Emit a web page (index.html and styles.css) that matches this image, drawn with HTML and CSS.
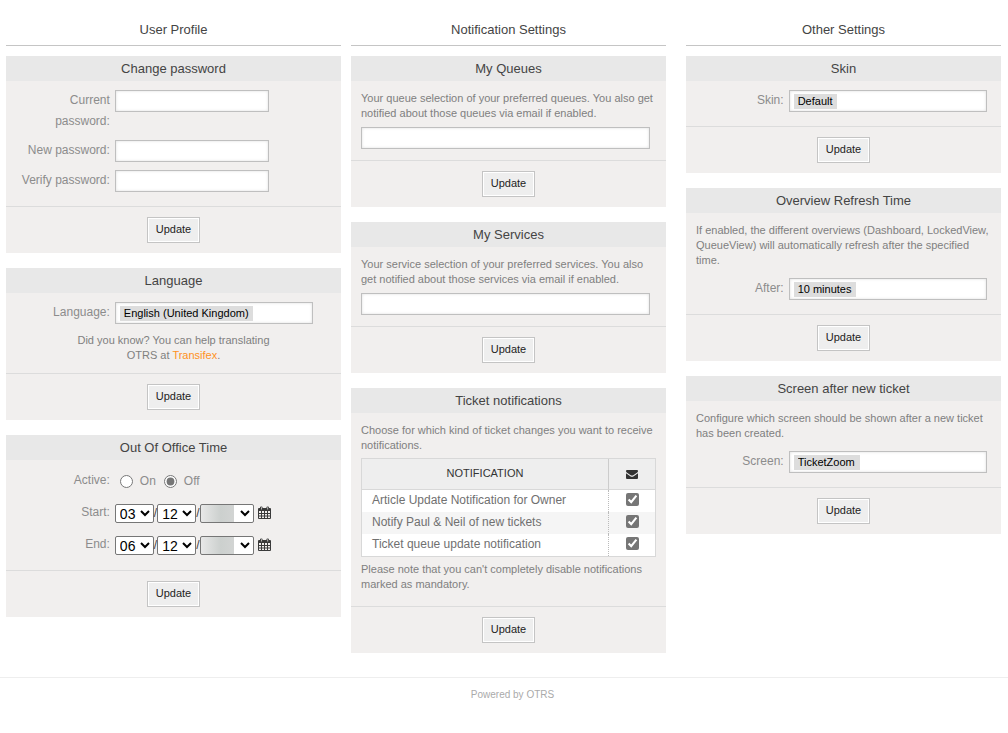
FILE: index.html
```html
<!DOCTYPE html>
<html lang="en">
<head>
<meta charset="utf-8">
<title>Preferences</title>
<link rel="stylesheet" href="styles.css">
</head>
<body>
<svg class="sprite" aria-hidden="true">
  <symbol id="calendar" viewBox="0 0 13 14">
    <path fill="#3a3a3a" fill-rule="evenodd" d="M2 1.500Q2 .5 3.300 .5T4.600 1.500V2H8.400V1.500Q8.400 .5 9.700 .5T11 1.500V2H12Q13 2 13 3V12Q13 13 12 13H1Q0 13 0 12V3Q0 2 1 2H2ZM1 5V7H3V5ZM4 5V7H6V5ZM7 5V7H9V5ZM10 5V7H12V5ZM1 8V9.500H3V8ZM4 8V9.500H6V8ZM7 8V9.500H9V8ZM10 8V9.500H12V8ZM1 10.500V12H3V10.500ZM4 10.500V12H6V10.500ZM7 10.500V12H9V10.500ZM10 10.500V12H12V10.500ZM3 1.300V3.500H3.700V1.300ZM9.400 1.300V3.500H10.100V1.300Z"/>
  </symbol>
</svg>

<main class="columns">
  <section class="column">
    <h1 class="column-title">User Profile</h1>

    <form class="widget">
      <h2 class="widget-title">Change password</h2>
      <div class="widget-body">
        <div class="field"><label for="cur">Current password:</label><input class="text-box" type="password" id="cur"></div>
        <div class="field"><label for="new">New password:</label><input class="text-box" type="password" id="new"></div>
        <div class="field"><label for="ver">Verify password:</label><input class="text-box" type="password" id="ver"></div>
      </div>
      <div class="widget-actions"><button type="button">Update</button></div>
    </form>

    <form class="widget">
      <h2 class="widget-title">Language</h2>
      <div class="widget-body with-hint">
        <div class="field"><label for="lang">Language:</label><div class="select-box"><select id="lang"><option>English (United Kingdom)</option></select></div></div>
        <p class="hint centered">Did you know? You can help translating OTRS at <a href="#">Transifex</a>.</p>
      </div>
      <div class="widget-actions"><button type="button">Update</button></div>
    </form>

    <form class="widget">
      <h2 class="widget-title">Out Of Office Time</h2>
      <div class="widget-body dates">
        <div class="field" role="radiogroup" aria-labelledby="active">
          <span class="label" id="active">Active:</span>
          <div class="radios">
            <input type="radio" name="ooo" id="on"><label for="on">On</label>
            <input type="radio" name="ooo" id="off" checked><label for="off">Off</label>
          </div>
        </div>
        <div class="field">
          <label for="start-day">Start:</label>
          <div class="date">
            <select id="start-day"><option>03</option></select><span>/</span><select aria-label="Start month"><option>12</option></select><span>/</span><select class="year" aria-label="Start year"><option></option></select>
            <a href="#" class="calendar" aria-label="Open calendar"><svg><use href="#calendar"/></svg></a>
          </div>
        </div>
        <div class="field">
          <label for="end-day">End:</label>
          <div class="date">
            <select id="end-day"><option>06</option></select><span>/</span><select aria-label="End month"><option>12</option></select><span>/</span><select class="year" aria-label="End year"><option></option></select>
            <a href="#" class="calendar" aria-label="Open calendar"><svg><use href="#calendar"/></svg></a>
          </div>
        </div>
      </div>
      <div class="widget-actions"><button type="button">Update</button></div>
    </form>
  </section>

  <section class="column middle">
    <h1 class="column-title">Notification Settings</h1>

    <form class="widget">
      <h2 class="widget-title">My Queues</h2>
      <div class="widget-body wide">
        <p class="hint">Your queue selection of your preferred queues. You also get notified about those queues via email if enabled.</p>
        <input class="text-box" type="text" aria-label="My Queues">
      </div>
      <div class="widget-actions"><button type="button">Update</button></div>
    </form>

    <form class="widget">
      <h2 class="widget-title">My Services</h2>
      <div class="widget-body wide">
        <p class="hint">Your service selection of your preferred services. You also get notified about those services via email if enabled.</p>
        <input class="text-box" type="text" aria-label="My Services">
      </div>
      <div class="widget-actions"><button type="button">Update</button></div>
    </form>

    <form class="widget">
      <h2 class="widget-title">Ticket notifications</h2>
      <div class="widget-body notifications">
        <p class="hint">Choose for which kind of ticket changes you want to receive notifications.</p>
        <table>
          <thead>
            <tr>
              <th scope="col">NOTIFICATION</th>
              <th scope="col" class="check" aria-label="Email">
                <svg class="mail" viewBox="0 0 12 9"><path fill="#333" d="M0 1Q0 0 1 0H11Q12 0 12 1V1.300Q12 1.900 11.300 2.400L7.300 5.200Q6 6 4.700 5.200L.7 2.400Q0 1.900 0 1.300ZM0 3.200 4.300 6.200Q6 7.200 7.700 6.200L12 3.200V8Q12 9 11 9H1Q0 9 0 8Z"/></svg>
              </th>
            </tr>
          </thead>
          <tbody>
            <tr><td><label for="n1">Article Update Notification for Owner</label></td><td class="check"><input type="checkbox" id="n1" checked></td></tr>
            <tr><td><label for="n2">Notify Paul &amp; Neil of new tickets</label></td><td class="check"><input type="checkbox" id="n2" checked></td></tr>
            <tr><td><label for="n3">Ticket queue update notification</label></td><td class="check"><input type="checkbox" id="n3" checked></td></tr>
          </tbody>
        </table>
        <p class="hint">Please note that you can't completely disable notifications marked as mandatory.</p>
      </div>
      <div class="widget-actions"><button type="button">Update</button></div>
    </form>
  </section>

  <section class="column">
    <h1 class="column-title">Other Settings</h1>

    <form class="widget">
      <h2 class="widget-title">Skin</h2>
      <div class="widget-body">
        <div class="field"><label for="skin">Skin:</label><div class="select-box"><select id="skin"><option>Default</option></select></div></div>
      </div>
      <div class="widget-actions"><button type="button">Update</button></div>
    </form>

    <form class="widget">
      <h2 class="widget-title">Overview Refresh Time</h2>
      <div class="widget-body described">
        <p class="hint">If enabled, the different overviews (Dashboard, LockedView, QueueView) will automatically refresh after the specified time.</p>
        <div class="field"><label for="after">After:</label><div class="select-box"><select id="after"><option>10 minutes</option></select></div></div>
      </div>
      <div class="widget-actions"><button type="button">Update</button></div>
    </form>

    <form class="widget">
      <h2 class="widget-title">Screen after new ticket</h2>
      <div class="widget-body described">
        <p class="hint">Configure which screen should be shown after a new ticket has been created.</p>
        <div class="field"><label for="screen">Screen:</label><div class="select-box"><select id="screen"><option>TicketZoom</option></select></div></div>
      </div>
      <div class="widget-actions"><button type="button">Update</button></div>
    </form>
  </section>
</main>

<footer class="page-footer">Powered by OTRS</footer>
</body>
</html>
```

FILE: styles.css
```css
* { box-sizing: border-box; }

body {
  margin: 0;
  background: #fff;
  color: #8c8c8c;
  font: 12px/21px "Liberation Sans", Arial, sans-serif;
}

h1, h2, p { margin: 0; }

button, input, select { margin: 0; font-family: inherit; }

.sprite { display: none; }

/* Columns */
.columns {
  display: grid;
  grid-template-columns: minmax(0, 335fr) minmax(0, 325fr) minmax(0, 315fr);
  column-gap: 10px;
  padding: 14px 7px 9px 6px;
}

.middle { padding-right: 10px; }

.column-title {
  height: 32px;
  margin-bottom: 10px;
  border-bottom: 1px solid #c5c5c5;
  color: #444;
  font-size: 13px;
  font-weight: normal;
  line-height: 31px;
  text-align: center;
}

/* Widgets */
.widget {
  margin-bottom: 15px;
  background: #f1efee;
}

.widget-title {
  background: #e8e8e8;
  color: #444;
  font-size: 13px;
  font-weight: normal;
  line-height: 25px;
  text-align: center;
}

.widget-body {
  display: flex;
  flex-direction: column;
  gap: 8px;
  padding: 9px 0 14px;
}

.widget-body.with-hint { gap: 9px; padding-bottom: 10px; }
.widget-body.described { gap: 10px; padding-top: 10px; }
.widget-body.dates { gap: 10px; padding-top: 10px; }
.widget-body.wide { gap: 6px; padding: 10px 10px 11px; }
.widget-body.notifications { gap: 5px; padding: 10px 10px 14px; }

.widget-actions {
  padding: 10px;
  border-top: 1px solid #dcdcdc;
  text-align: center;
  line-height: 0;
}

button {
  height: 26px;
  padding: 0 8px 2px;
  border: 1px solid #c4c4c4;
  background: #eee;
  box-shadow: inset 0 0 0 1px #fff;
  color: #222;
  font-size: 11px;
}

.hint {
  color: #808080;
  font-size: 11px;
  line-height: 15px;
}

.described .hint { padding: 0 10px; }
.centered { padding: 0 65px; text-align: center; }
.hint a { color: #ff9123; text-decoration: none; }

/* Fields */
.field {
  display: flex;
  gap: 5px;
  min-height: 22px;
}

.field > label, .label {
  flex: none;
  width: 31%;
  padding-left: 10px;
  text-align: right;
}

.text-box, .select-box {
  height: 22px;
  border: 1px solid #bfbfbf;
  background: #fff;
  box-shadow: inset 0 0 3px #ddd;
}

.text-box { width: 154px; }
.wide .text-box { width: 98%; }

.select-box {
  display: flex;
  align-items: center;
  width: 198px;
  padding-left: 4px;
}

.select-box select {
  height: 15px;
  padding: 0 4px;
  border: 0;
  border-radius: 0;
  appearance: none;
  background: #ddd;
  color: #000;
  font-size: 11px;
}

/* Out of office */
.radios, .date {
  display: flex;
  align-items: center;
}

.radios { padding-left: 5px; }
.radios label { padding: 0 8px 0 7px; }
.radios input, .check input { width: 13px; height: 13px; accent-color: #767676; }

.date { color: #444; }

.date select {
  width: 39px;
  height: 19px;
  padding: 0;
  border: 1px solid #767676;
  border-radius: 2px;
  background: #fff;
  color: #000;
  font-size: 14px;
}

.date .year {
  width: 54px;
  background: linear-gradient(90deg, #e8e8e8, #ccd0ce 60%, #d2d4d3) 0 0 / 33px 100% no-repeat #fff;
}

.calendar { margin-left: 4px; line-height: 0; }
.calendar svg { width: 13px; height: 14px; }

/* Notification table */
table {
  width: 100%;
  border: 1px solid #d8d8d8;
  border-collapse: separate;
  border-spacing: 0;
  background: #fff;
}

th {
  height: 31px;
  padding: 0 0 1px;
  border-bottom: 1px solid #d8d8d8;
  background: #eee;
  color: #333;
  font-size: 11px;
  font-weight: normal;
}

td {
  height: 22px;
  padding: 0 10px 1px;
  color: #707070;
}

tbody tr:nth-child(even) { background: #f5f5f5; }

.check {
  width: 47px;
  padding: 0;
  border-left: 1px solid #ccc;
  text-align: center;
  line-height: 0;
}

td.check { padding-bottom: 3px; border-left: 1px dotted #bbb; }

.mail { width: 12px; height: 9px; }

.page-footer {
  padding: 6px 0 30px 17px;
  border-top: 1px solid #eee;
  color: #aaa;
  font-size: 10px;
  text-align: center;
}
```
